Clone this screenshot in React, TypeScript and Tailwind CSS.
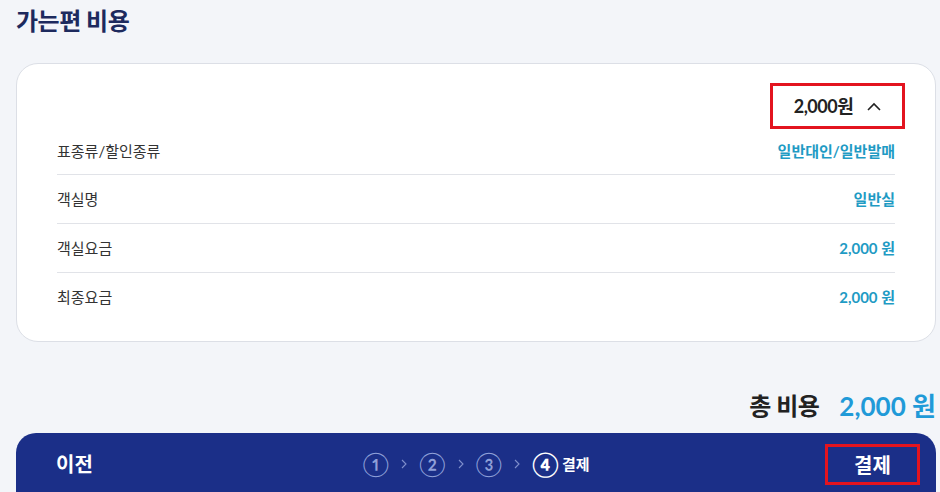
import React from "react";

const rows = [
  { label: "표종류/할인종류", value: "일반대인/일반발매" },
  { label: "객실명", value: "일반실" },
  { label: "객실요금", value: "2,000 원" },
  { label: "최종요금", value: "2,000 원" },
];

function Sep() {
  return (
    <svg width="6" height="10" viewBox="0 0 6 10" fill="none">
      <path d="M1 1 L5 5 L1 9" stroke="#7f8fcc" strokeWidth="1.1" />
    </svg>
  );
}

export default function App() {
  return (
    <div
      className="w-[940px] h-[492px] overflow-hidden bg-[#f3f5f9] flex flex-col"
      style={{ fontFamily: "Lato, 'Noto Sans CJK KR', sans-serif" }}
    >
      <h1 className="px-4 pt-[4px] text-[24px] leading-[34px] font-bold text-[#1d2a5e] tracking-[-0.5px]">
        가는편 비용
      </h1>
      <div className="mx-4 mt-[25px] w-[920px] rounded-[22px] border border-[#dcdfe6] bg-white px-10 pt-[19px] pb-[19px]">
        <div className="flex justify-end">
          <div className="mr-[-10px] flex h-[46px] w-[135px] items-center justify-center gap-[14px] border-[3px] border-[#e3141f]">
            <span className="text-[18px] font-bold text-[#222] tracking-[-0.5px]">2,000원</span>
            <svg width="14" height="9" viewBox="0 0 14 9" fill="none">
              <path d="M1 8 L7 2 L13 8" stroke="#222" strokeWidth="1.6" />
            </svg>
          </div>
        </div>
        {rows.map((r, i) => (
          <div
            key={r.label}
            className={`flex items-center justify-between ${i === 0 ? "h-[46px]" : "h-[49px]"} ${i < rows.length - 1 ? "border-b border-[#e1e3e8]" : ""}`}
          >
            <span className="text-[15px] text-[#333]">{r.label}</span>
            <span className="text-[15px] font-bold text-[#1f9bc4]">{r.value}</span>
          </div>
        ))}
      </div>
      <div className="mt-[49px] flex items-center justify-end gap-[20px] pr-[4px]">
        <span className="text-[24px] leading-[30px] font-bold text-[#222] tracking-[-0.5px]">총 비용</span>
        <span className="text-[26px] leading-[30px] font-bold text-[#1f9ad8]">2,000 원</span>
      </div>
      <div className="relative mx-4 mt-[12px] flex h-[70px] w-[920px] items-start rounded-t-[20px] bg-[#1b2f88] pt-[11px]">
        <div className="flex h-[40px] w-[160px] items-center pl-10">
          <span className="text-[20px] font-bold text-white">이전</span>
        </div>
        <div className="flex h-[40px] flex-1 items-center justify-center gap-[12px] text-[#8fa0d8] pl-[0px]">
          <span className="text-[24px] leading-none">①</span>
          <Sep />
          <span className="text-[24px] leading-none">②</span>
          <Sep />
          <span className="text-[24px] leading-none">③</span>
          <Sep />
          <span className="flex items-center gap-[3px] text-white">
            <span className="text-[24px] leading-none font-bold">④</span>
            <span className="text-[15px] font-bold">결제</span>
          </span>
        </div>
        <div className="flex w-[160px] justify-end pr-[16px]">
          <div className="flex h-[41px] w-[95px] items-center justify-center border-[3px] border-[#e3141f]">
            <span className="text-[20px] font-bold text-white">결제</span>
          </div>
        </div>
      </div>
    </div>
  );
}
